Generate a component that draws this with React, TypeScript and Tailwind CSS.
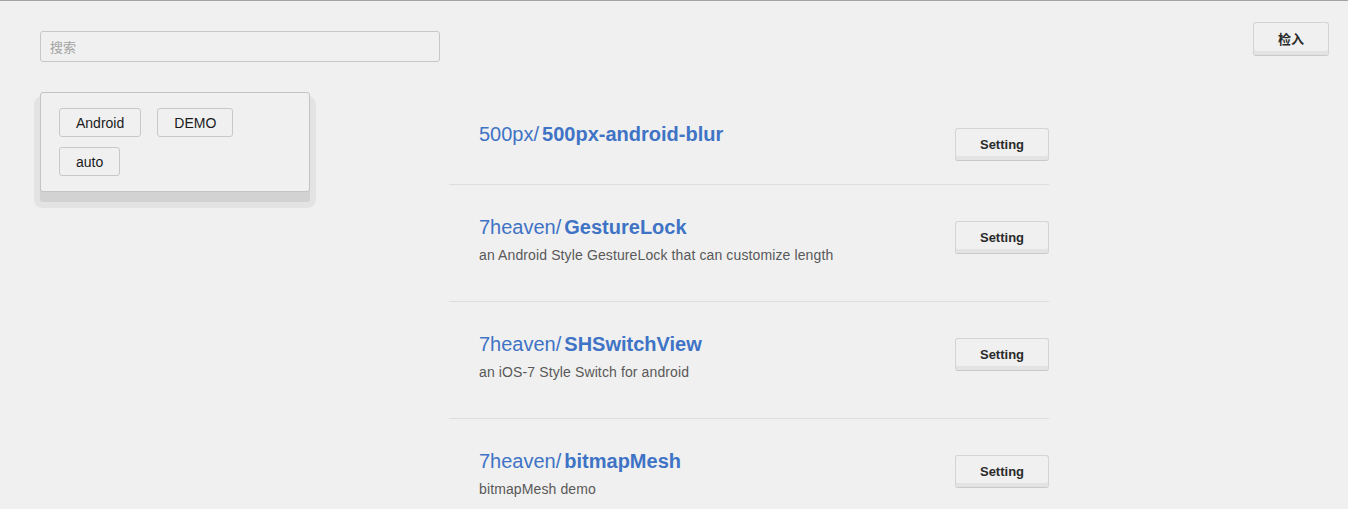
import React from "react";

const repos: { owner: string; name: string; desc?: string }[] = [
  { owner: "500px", name: "500px-android-blur" },
  { owner: "7heaven", name: "GestureLock", desc: "an Android Style GestureLock that can customize length" },
  { owner: "7heaven", name: "SHSwitchView", desc: "an iOS-7 Style Switch for android" },
  { owner: "7heaven", name: "bitmapMesh", desc: "bitmapMesh demo" },
];

function Tag({ label }: { label: string }) {
  return (
    <div className="h-[29px] px-4 flex items-center border border-[#c9c9c9] rounded-[3px] text-[14px] text-[#1a1a1a] leading-none">
      {label}
    </div>
  );
}

export default function App() {
  return (
    <div
      className="min-h-[509px] bg-[#f0f0f0] border-t border-[#a3a3a3] overflow-hidden"
      style={{ fontFamily: '"Liberation Sans", Arial, "Noto Sans CJK SC", sans-serif' }}
    >
      <div className="flex justify-between items-start pl-[40px] pr-[19px]">
        <div className="mt-[30px] w-[400px] h-[31px] border border-[#c7c7c7] rounded-[3px] flex items-center pl-[9px]">
          <span className="text-[13px] text-[#a3a3a3]" style={{ fontFamily: '"Noto Sans CJK SC", sans-serif' }}>
            搜索
          </span>
        </div>
        <button className="mt-[21px] w-[76px] h-[34px] border border-[#d4d4d4] border-b-[#c9c9c9] rounded-[3px] bg-[#f0f0f0] shadow-[inset_0_-4px_0_#e3e3e3] text-[13px] font-bold text-[#2a2a2a] flex items-center justify-center">
          <span style={{ fontFamily: '"Noto Sans CJK SC", sans-serif' }}>检入</span>
        </button>
      </div>

      <div className="flex mt-[30px] pl-[40px]">
        <div className="w-[409px] shrink-0">
          <div className="w-[270px] border border-[#c4c4c4] rounded-[3px] bg-[#f0f0f0] shadow-[0_10px_0_0_#d2d2d2,0_10px_0_6px_#e3e3e3] pt-[15px] pb-[15px] pl-[18px]">
            <div className="flex gap-4">
              <Tag label="Android" />
              <Tag label="DEMO" />
            </div>
            <div className="flex mt-[10px]">
              <Tag label="auto" />
            </div>
          </div>
        </div>

        <div className="w-[600px] shrink-0">
          {repos.map((r, i) => (
            <div
              key={i}
              className={
                r.desc
                  ? "flex justify-between items-start border-b border-[#dddddd] pl-[30px] pt-[31px] pb-[36px]"
                  : "flex justify-between items-start border-b border-[#dddddd] pl-[30px] pt-[31px] pb-[23px]"
              }
            >
              <div>
                <div className="text-[20px] leading-[23px] text-[#3f73c6]">
                  <span>{r.owner}/</span>
                  <span className="font-bold ml-[3px]">{r.name}</span>
                </div>
                {r.desc && (
                  <div className="mt-[6px] text-[14px] leading-[20px] tracking-[0.12px] text-[#595959]">{r.desc}</div>
                )}
              </div>
              <button className="mt-[5px] w-[94px] h-[33px] border border-[#d4d4d4] border-b-[#c9c9c9] rounded-[3px] bg-[#f0f0f0] shadow-[inset_0_-4px_0_#e3e3e3] text-[13px] font-bold text-[#2a2a2a] flex items-center justify-center">
                Setting
              </button>
            </div>
          ))}
        </div>
      </div>
    </div>
  );
}
